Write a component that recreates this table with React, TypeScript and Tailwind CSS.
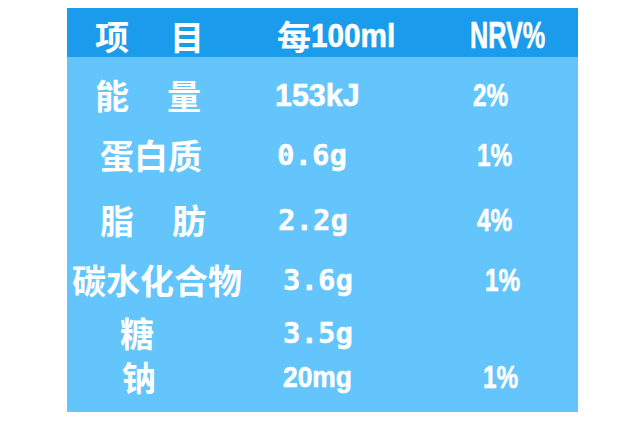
import React from "react";

const cjk = "font-['Noto_Sans_CJK_SC',sans-serif] font-bold text-[34px] leading-[40px]";
const sans = "inline-block origin-left font-['Liberation_Sans',Arial,sans-serif] font-bold leading-[40px] [-webkit-text-stroke:0.6px_white]";
const mono = "font-['DejaVu_Sans_Mono',monospace] font-bold text-[29px] leading-[40px] [-webkit-text-stroke:0.4px_white]";

type RowProps = {
  className: string;
  label: React.ReactNode;
  labelPad: string;
  value: React.ReactNode;
  valuePad: string;
  nrv?: React.ReactNode;
  nrvPad?: string;
};

function Row({ className, label, labelPad, value, valuePad, nrv, nrvPad = "" }: RowProps) {
  return (
    <div className={`flex items-center h-[40px] ${className}`}>
      <div className={`w-[205px] shrink-0 flex ${labelPad}`}>{label}</div>
      <div className={`w-[195px] shrink-0 ${valuePad}`}>{value}</div>
      <div className={`flex-1 ${nrvPad}`}>{nrv}</div>
    </div>
  );
}

const pct = (t: string) => <span className={`${sans} text-[32px] scale-x-[0.76]`}>{t}</span>;

export default function App() {
  return (
    <div className="w-[640px] h-[421px] bg-white pt-[8px] pl-[67px]">
      <div className="w-[511px] h-[404px] bg-[#63c5fb] text-white">
        {/* header band */}
        <div className="h-[49px] bg-[#1b9beb] pt-[7px] flex items-center">
          <div className="w-[205px] shrink-0 flex pl-[28px]">
            <span className={cjk}>项</span>
            <span className={`${cjk} ml-[41px]`}>目</span>
          </div>
          <div className="w-[195px] shrink-0 pl-[5px] flex items-center">
            <span className={`${cjk} text-[31px]`}>每</span>
            <span className={`${sans} text-[33px] scale-x-[0.9]`}>100ml</span>
          </div>
          <div className="flex-1 pl-[3px]">
            <span className={`${sans} text-[36px] scale-x-[0.7]`}>NRV%</span>
          </div>
        </div>

        <div className="pt-[18px]">
          <Row
            className=""
            labelPad="pl-[28px]"
            label={<><span className={cjk}>能</span><span className={`${cjk} ml-[38px]`}>量</span></>}
            valuePad="pl-[3px]"
            value={<span className={`${sans} text-[32px] scale-x-[0.95]`}>153kJ</span>}
            nrvPad="pl-[6px]"
            nrv={pct("2%")}
          />
          <Row
            className="mt-[20px]"
            labelPad="pl-[33px]"
            label={<span className={cjk}>蛋白质</span>}
            valuePad="pl-[5px]"
            value={<span className={mono}>0.6g</span>}
            nrvPad="pl-[10px]"
            nrv={pct("1%")}
          />
          <Row
            className="mt-[25px]"
            labelPad="pl-[33px]"
            label={<><span className={cjk}>脂</span><span className={`${cjk} ml-[38px]`}>肪</span></>}
            valuePad="pl-[6px]"
            value={<span className={mono}>2.2g</span>}
            nrvPad="pl-[10px]"
            nrv={pct("4%")}
          />
          <Row
            className="mt-[20px]"
            labelPad="pl-[5px]"
            label={<span className={cjk}>碳水化合物</span>}
            valuePad="pl-[11px]"
            value={<span className={mono}>3.6g</span>}
            nrvPad="pl-[18px]"
            nrv={pct("1%")}
          />
          <Row
            className="mt-[13px]"
            labelPad="pl-[53px]"
            label={<span className={cjk}>糖</span>}
            valuePad="pl-[11px]"
            value={<span className={mono}>3.5g</span>}
          />
          <Row
            className="mt-[4px]"
            labelPad="pl-[55px]"
            label={<span className={cjk}>钠</span>}
            valuePad="pl-[11px]"
            value={<span className={`${sans} text-[30px] scale-x-[0.88]`}>20mg</span>}
            nrvPad="pl-[16px]"
            nrv={pct("1%")}
          />
        </div>
      </div>
    </div>
  );
}
